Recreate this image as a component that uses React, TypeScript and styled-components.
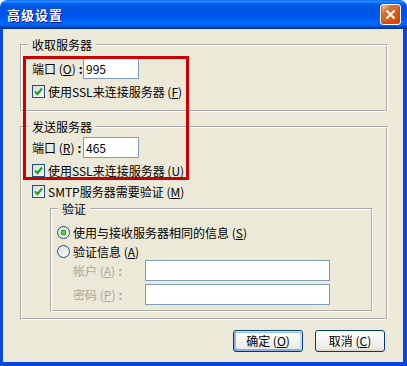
import { ReactNode } from "react";
import styled, { createGlobalStyle } from "styled-components";

const GlobalStyle = createGlobalStyle`
  html, body {
    margin: 0;
    padding: 0;
    background: #ffffff;
  }
  body {
    font-family: "Noto Sans CJK SC", "Liberation Sans", sans-serif;
    font-size: 12px;
  }
`;

const FONT = `"Noto Sans CJK SC", "Liberation Sans", sans-serif`;

const Key = ({ k }: { k: string }) => (
  <>
    {" ("}
    <u>{k}</u>
    {")"}
  </>
);

const CheckMark = () => (
  <svg width="11" height="11" viewBox="0 0 11 11">
    <polyline
      points="2,5.5 4.5,8 9,2.5"
      fill="none"
      stroke="#21a121"
      strokeWidth="2.2"
    />
  </svg>
);

const CloseGlyph = () => (
  <svg width="11" height="11" viewBox="0 0 11 11">
    <path d="M1.5 1.5 L9.5 9.5 M9.5 1.5 L1.5 9.5" stroke="#fff" strokeWidth="2.2" />
  </svg>
);

const Check = ({ children }: { children: ReactNode }) => (
  <CheckRow>
    <CheckBox>
      <CheckMark />
    </CheckBox>
    <span>{children}</span>
  </CheckRow>
);

const Option = ({ checked, children }: { checked?: boolean; children: ReactNode }) => (
  <CheckRow>
    <Radio $checked={checked} />
    <span>{children}</span>
  </CheckRow>
);

export default function App() {
  return (
    <>
      <GlobalStyle />
      <Window>
        <TitleBar>
          <Title>高级设置</Title>
          <CloseButton aria-label="关闭">
            <CloseGlyph />
          </CloseButton>
        </TitleBar>
        <Body>
          <Group $pad="6px 10px 10px 10px">
            <Legend>收取服务器</Legend>
            <Stack $gap={4}>
              <FieldRow>
                <FieldLabel $width={51}>
                  端口<Key k="O" />
                  <Colon>:</Colon>
                </FieldLabel>
                <TextInput $width={56} defaultValue="995" />
              </FieldRow>
              <Check>
                使用SSL来连接服务器<Key k="F" />
              </Check>
            </Stack>
          </Group>

          <Group $pad="3px 13px 6px 10px" $top={8}>
            <Legend>发送服务器</Legend>
            <Stack $gap={4}>
              <FieldRow>
                <FieldLabel $width={51}>
                  端口<Key k="R" />
                  <Colon>:</Colon>
                </FieldLabel>
                <TextInput $width={56} defaultValue="465" />
              </FieldRow>
              <Check>
                使用SSL来连接服务器<Key k="U" />
              </Check>
              <Check>
                SMTP服务器需要验证<Key k="M" />
              </Check>
            </Stack>
            <Group $pad="8px 0 5px 5px" $top={2} $left={18}>
              <Legend $offset={1}>验证</Legend>
              <Stack $gap={2}>
                <Option checked>
                  使用与接收服务器相同的信息<Key k="S" />
                </Option>
                <Option>
                  验证信息<Key k="A" />
                </Option>
              </Stack>
              <SubForm $gap={3}>
                <FieldRow>
                  <FieldLabel $width={72} $disabled>
                    帐户<Key k="A" />
                    <Colon>:</Colon>
                  </FieldLabel>
                  <TextInput $width={185} />
                </FieldRow>
                <FieldRow>
                  <FieldLabel $width={72} $disabled>
                    密码<Key k="P" />
                    <Colon>:</Colon>
                  </FieldLabel>
                  <TextInput $width={185} type="password" />
                </FieldRow>
              </SubForm>
            </Group>
          </Group>

          <ButtonBar>
            <Button $default>
              确定<Key k="O" />
            </Button>
            <Button>
              取消<Key k="C" />
            </Button>
          </ButtonBar>

          <Highlight />
        </Body>
      </Window>
    </>
  );
}

const Window = styled.div`
  width: 407px;
  height: 366px;
  display: flex;
  flex-direction: column;
  font-family: ${FONT};
  font-size: 12px;
  color: #000;
`;

const TitleBar = styled.div`
  height: 29px;
  flex: 0 0 29px;
  box-sizing: border-box;
  display: flex;
  align-items: center;
  justify-content: space-between;
  padding: 0 6px 0 7px;
  border-radius: 7px 7px 0 0;
  background: linear-gradient(
    180deg,
    #0058ee 0%,
    #3593ff 4%,
    #288eff 6%,
    #127dff 8%,
    #036ffc 10%,
    #0262ee 14%,
    #0057e5 20%,
    #0054e3 24%,
    #0055eb 56%,
    #005bf5 66%,
    #026afe 76%,
    #0062ef 86%,
    #0052d6 92%,
    #0040ab 94%,
    #003092 100%
  );
`;

const Title = styled.span`
  color: #fff;
  font-weight: bold;
  font-size: 13px;
  line-height: 16px;
  letter-spacing: 1px;
  text-shadow: 1px 1px 0 #0f1089;
`;

const CloseButton = styled.button`
  width: 21px;
  height: 21px;
  padding: 0;
  display: flex;
  align-items: center;
  justify-content: center;
  border: 1px solid #fff;
  border-radius: 3px;
  background: radial-gradient(
    circle at 90% 90%,
    #cc4600 0%,
    #dc6527 55%,
    #cd7546 70%,
    #ffccb2 90%,
    #fff 100%
  );
  box-shadow: inset 0 -1px 2px 1px #da4600;
`;

const Body = styled.div`
  flex: 1;
  position: relative;
  display: flex;
  flex-direction: column;
  background: #ece9d8;
  border-style: solid;
  border-color: #0846dc;
  border-width: 0 4px 4px 3px;
  padding: 9px 15px 0 17px;
`;

const Group = styled.fieldset<{ $pad: string; $top?: number; $left?: number }>`
  margin: ${(p) => p.$top ?? 0}px 0 0 ${(p) => p.$left ?? 0}px;
  min-width: 0;
  padding: ${(p) => p.$pad};
  border: 2px groove #ffffff;
`;

const Legend = styled.legend<{ $offset?: number }>`
  margin-left: ${(p) => p.$offset ?? -4}px;
  padding: 0 4px;
  font-size: 12px;
  line-height: 14px;
  color: #000;
`;

const Stack = styled.div<{ $gap: number }>`
  display: flex;
  flex-direction: column;
  gap: ${(p) => p.$gap}px;
`;

const SubForm = styled(Stack)`
  margin-left: 16px;
`;

const FieldRow = styled.div`
  display: flex;
  align-items: center;
  height: 21px;
`;

const FieldLabel = styled.span<{ $width: number; $disabled?: boolean }>`
  flex: 0 0 ${(p) => p.$width}px;
  white-space: nowrap;
  line-height: 14px;
  color: ${(p) => (p.$disabled ? "#aca899" : "#000")};
`;

const Colon = styled.span`
  font-weight: bold;
  margin-left: 3px;
`;

const TextInput = styled.input<{ $width: number }>`
  width: ${(p) => p.$width}px;
  height: 21px;
  box-sizing: border-box;
  margin: 0;
  padding: 0 2px;
  border: 1px solid #7f9db9;
  background: #fff;
  font-family: ${FONT};
  font-size: 12px;
  color: #000;
  outline: none;
`;

const CheckRow = styled.div`
  display: flex;
  align-items: center;
  gap: 3px;
  height: 17px;
  line-height: 14px;
  white-space: nowrap;
`;

const CheckBox = styled.span`
  width: 13px;
  height: 13px;
  box-sizing: border-box;
  display: flex;
  align-items: center;
  justify-content: center;
  border: 1px solid #1c5180;
  background: linear-gradient(135deg, #dcdcd7 0%, #fbfbf9 100%);
`;

const Radio = styled.span<{ $checked?: boolean }>`
  width: 13px;
  height: 13px;
  box-sizing: border-box;
  border-radius: 50%;
  border: 1px solid #1c5180;
  background: ${(p) =>
    p.$checked
      ? "radial-gradient(circle, #6fdc6f 0%, #21a121 35%, transparent 40%), linear-gradient(135deg, #dcdcd7 0%, #fbfbf9 100%)"
      : "linear-gradient(135deg, #dcdcd7 0%, #fbfbf9 100%)"};
`;

const ButtonBar = styled.div`
  display: flex;
  justify-content: flex-end;
  gap: 12px;
  margin-top: 10px;
  padding-right: 3px;
`;

const Button = styled.button<{ $default?: boolean }>`
  width: 70px;
  height: 22px;
  padding: 0;
  border: 1px solid #003c74;
  border-radius: 3px;
  font-family: ${FONT};
  font-size: 12px;
  line-height: 14px;
  color: #000;
  background: linear-gradient(180deg, #fff 0%, #ecebe6 86%, #d6d0c5 100%);
  box-shadow: ${(p) =>
    p.$default
      ? "inset -1px 1px #cee7ff, inset 1px 2px #98b8ea, inset -2px 2px #bcd4f6, inset 1px -1px #89ade4, inset 2px -2px #89ade4"
      : "none"};
`;

const Highlight = styled.div`
  position: absolute;
  left: 20px;
  top: 27px;
  width: 166px;
  height: 124px;
  box-sizing: border-box;
  border: 3px solid #cc0000;
  pointer-events: none;
`;
